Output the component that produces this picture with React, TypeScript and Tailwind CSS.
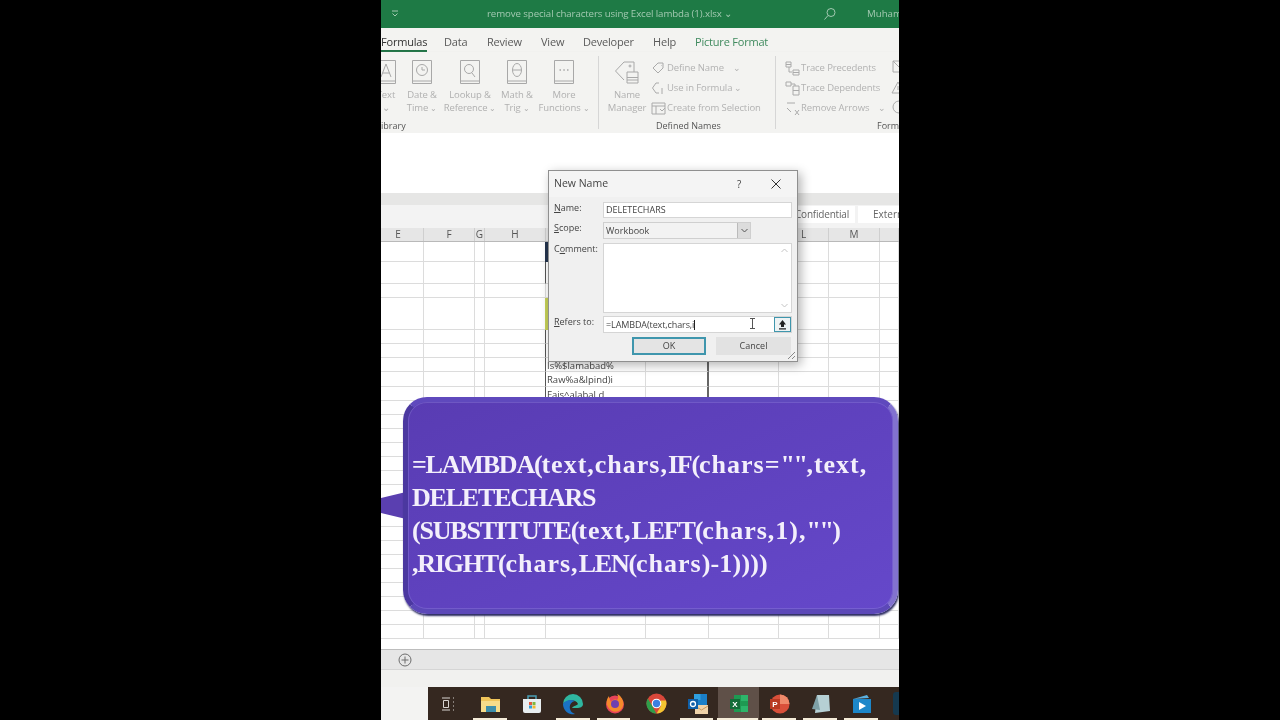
import React from "react";

const rowHeights = ["h-[20px]", "h-[22px]", "h-[14px]", "h-[32px]", "h-[14px]", "h-[14px]", "h-[14px]", "h-[15px]", ...Array(18).fill("h-[14px]")];
const colWidths = ["w-[43px]", "w-[51px]", "w-[10px]", "w-[61px]", "w-[100px]", "w-[63px]", "w-[70px]", "w-[50px]", "w-[51px]", "w-[19px]"];
const headers = ["E", "F", "G", "H", "", "", "", "L", "M", ""];
const cellText: Record<number, string> = { 6: "Is%$lamabad%", 7: "Raw%a&lpind)i", 8: "Fais^alabal d" };

function Book({ children }: { children?: React.ReactNode }) {
  return (
    <svg width="24" height="24" viewBox="0 0 24 24" fill="none" stroke="#a8a8a8" strokeWidth="1">
      <path d="M2.500.5h19v23h-19zM2.500 21h19" />
      {children}
    </svg>
  );
}

function FnItem({ icon, a, b, w, chevronOn }: { icon: React.ReactNode; a: string; b: string; w: string; chevronOn?: boolean }) {
  return (
    <div className={`flex flex-col items-center shrink-0 ${w}`}>
      <div className="h-[24px]">{icon}</div>
      <div className="mt-[4px] text-[9.5px] leading-[13px] tracking-[-0.1px] whitespace-nowrap text-[#b0b0b0]">{a}</div>
      <div className="text-[9.5px] leading-[13px] tracking-[-0.1px] whitespace-nowrap text-[#b0b0b0]">{b}{chevronOn ? <span className="text-[8px]"> ⌄</span> : null}</div>
    </div>
  );
}

function SmallRow({ icon, text, chev }: { icon: React.ReactNode; text: string; chev?: string }) {
  return (
    <div className="flex items-center h-[20px] whitespace-nowrap text-[9.5px] tracking-[-0.1px] text-[#b2b2b2]">
      <svg width="15" height="15" viewBox="0 0 15 15" fill="none" stroke="#aaaaaa" strokeWidth="1" className="shrink-0 mr-[1px]">{icon}</svg>
      <span>{text}</span>
      {chev ? <span className={`text-[9px] ${chev}`}>⌄</span> : null}
    </div>
  );
}

function TaskIcon({ children, cls }: { children: React.ReactNode; cls: string }) {
  return (
    <div className={`relative flex h-full shrink-0 items-center justify-center ${cls}`}>
      {children}
    </div>
  );
}

function Caps({ children }: { children: React.ReactNode }) {
  return <span className="tracking-[-1.2px]">{children}</span>;
}
function Low({ children }: { children: React.ReactNode }) {
  return <span className="tracking-[1px]">{children}</span>;
}
function Q() {
  return <span className="tracking-[-1.5px]">""</span>;
}

export default function App() {
  return (
    <div className="flex h-[720px] w-full justify-center overflow-hidden bg-black font-['Open_Sans','Noto_Sans',sans-serif]">
      <div className="relative flex h-[720px] w-[518px] shrink-0 flex-col overflow-hidden bg-white blur-[0.35px]">
        {/* Title bar */}
        <div className="flex h-[28px] shrink-0 items-center bg-[#1e7a45] text-[9.7px] text-[#a3c9b1]">
          <svg width="8" height="8" viewBox="0 0 8 8" fill="none" stroke="#a3c9b1" className="ml-[10px] shrink-0"><path d="M1 1h6M1.500 3.500 4 6l2.500-2.500" /></svg>
          <div className="ml-[88px] w-[250px] shrink-0 whitespace-nowrap tracking-[-0.1px]">remove special characters using Excel lambda (1).xlsx ⌄</div>
          <svg width="14" height="14" viewBox="0 0 14 14" fill="none" stroke="#a3c9b1" className="ml-[86px] shrink-0"><circle cx="8" cy="5.500" r="4" /><path d="M5 8.500 1.500 12.500" /></svg>
          <div className="ml-[30px] whitespace-nowrap">Muhammad</div>
        </div>

        {/* Tabs */}
        <div className="flex h-[24px] shrink-0 items-start bg-[#f3f3f1] pt-[4px] text-[11px] leading-[20px] tracking-[-0.2px] text-[#5a5a5a]">
          <div className="h-[20px] w-[46px] border-b-[2px] border-[#1f7244] text-[#333]">Formulas</div>
          <div className="ml-[17px] w-[43px]">Data</div>
          <div className="w-[54px]">Review</div>
          <div className="w-[42px]">View</div>
          <div className="w-[70px]">Developer</div>
          <div className="w-[42px]">Help</div>
          <div className="whitespace-nowrap text-[#3f8a5e]">Picture Format</div>
        </div>

        {/* Ribbon */}
        <div className="flex h-[81px] shrink-0 bg-[#f3f3f1] shadow-[0_3px_4px_#c9c9c9]">
          <div className="relative flex w-[217px] shrink-0 pt-[8px]">
            <div className="ml-[-10px] flex">
              <FnItem w="w-[30px]" a="Text" b="⌄" icon={<Book><path d="M7 17 12 4l5 13M8.500 13h7" /></Book>} />
              <FnItem w="w-[42px]" a="Date &" b="Time" chevronOn icon={<Book><circle cx="12" cy="10" r="5.500" /><path d="M12 7v3h3" /></Book>} />
              <FnItem w="w-[54px]" a="Lookup &" b="Reference" chevronOn icon={<Book><circle cx="11" cy="9" r="4.500" /><path d="m14 13 3 4" /></Book>} />
              <FnItem w="w-[40px]" a="Math &" b="Trig" chevronOn icon={<Book><ellipse cx="12" cy="10" rx="4.500" ry="6.500" /><path d="M7.500 10h9" /></Book>} />
              <FnItem w="w-[54px]" a="More" b="Functions" chevronOn icon={<Book><path d="M7.500 10h1.500M11.300 10h1.500M15 10h1.500" strokeWidth="1.500" /></Book>} />
            </div>
            <div className="absolute bottom-[1px] left-0 text-[9px] leading-[13px] text-[#555]">ibrary</div>
          </div>
          <div className="my-[4px] w-px shrink-0 bg-[#d6d6d6]" />
          <div className="relative flex w-[176px] shrink-0 pt-[8px]">
            <FnItem
              w="w-[56px]"
              a="Name"
              b="Manager"
              icon={
                <svg width="26" height="25" viewBox="0 0 26 25" fill="none" stroke="#a8a8a8">
                  <path d="M1.500 11 10 2h10v10M10 20 1.500 11" />
                  <circle cx="16" cy="6" r="1" />
                  <path d="M13 12h11v11H13zM13 17.500h11M13 20h11" />
                </svg>
              }
            />
            <div className="ml-[-4px] mt-[-2px] flex flex-col">
              <SmallRow text="Define Name" chev="ml-[9px]" icon={<path d="M2 7 7 2h5v5l-5 5zM10 4.500h.5" />} />
              <SmallRow text="Use in Formula" chev="ml-[2px]" icon={<path d="M8 2H5L1.500 7 5 12h3M11 7v6" />} />
              <SmallRow text="Create from Selection" icon={<path d="M1 2h13v11H1zM1 5h13M5 5v8M9 8l2 2 3-3" />} />
            </div>
            <div className="absolute bottom-[1px] left-[57px] text-[9px] leading-[13px] text-[#555]">Defined Names</div>
          </div>
          <div className="my-[4px] w-px shrink-0 bg-[#d6d6d6]" />
          <div className="relative flex-1 overflow-hidden pt-[6px] pl-[9px]">
            <SmallRow text="Trace Precedents" icon={<path d="M1 1h5v5H1zM1 3.500h5M8 9h6v5H8zM8 11.500h6M4 6v5h3" />} />
            <SmallRow text="Trace Dependents" icon={<path d="M1 1h5v4H1zM8 5h6v9H8zM8 9.500h6M6 3h4v2" />} />
            <SmallRow text="Remove Arrows" chev="ml-[9px]" icon={<path d="M2 2h8M2 7l4 4M10 9l4 5M14 9l-4 5" />} />
            <div className="absolute left-[114px] top-[6px] flex flex-col">
              <svg width="15" height="20" viewBox="0 0 15 20" fill="none" stroke="#aaa"><path d="M3 3h11v11H3zM3 3l9 9" /></svg>
              <svg width="15" height="20" viewBox="0 0 15 20" fill="none" stroke="#aaa"><path d="M8 4 2 15h12zM8 8v4" /></svg>
              <svg width="15" height="20" viewBox="0 0 15 20" fill="none" stroke="#aaa"><circle cx="9" cy="9" r="6" /></svg>
            </div>
            <div className="absolute bottom-[1px] left-[101px] text-[9px] leading-[13px] text-[#555]">Formulas</div>
          </div>
        </div>

        {/* Formula bar region */}
        <div className="h-[60px] shrink-0 bg-white" />
        <div className="h-[12px] shrink-0 bg-[#e6e6e5]" />

        {/* Sensitivity strip */}
        <div className="flex h-[23px] shrink-0 items-start justify-end bg-[#f3f3f3] pt-[1px] text-[10px] text-[#666]">
          <div className="flex h-[17px] w-[66px] items-center whitespace-nowrap bg-white pl-[6px] tracking-[-0.2px]">Confidential</div>
          <div className="ml-[3px] flex h-[17px] w-[41px] items-center overflow-hidden whitespace-nowrap bg-white pl-[15px]">External</div>
        </div>

        {/* Column headers */}
        <div className="flex h-[14px] shrink-0 border-b border-[#b9b9b9] bg-[#e6e6e6] text-[10px] leading-[13px] text-[#555]">
          {headers.map((h, i) => (
            <div key={i} className={`${colWidths[i]} shrink-0 border-r border-[#cfcfcf] text-center ${i === 0 ? "pr-[8px]" : ""}`}>{h}</div>
          ))}
        </div>

        {/* Grid */}
        <div className="relative min-h-0 flex-1 overflow-hidden">
          {rowHeights.map((rh, r) => (
            <div key={r} className={`flex ${rh} shrink-0`}>
              {colWidths.map((w, c) => (
                <div
                  key={c}
                  className={`${w} shrink-0 overflow-hidden whitespace-nowrap border-b border-r border-[#dcdcdc] pl-[1px] text-[9.5px] leading-[15px] text-[#444] ${c === 3 && r !== 2 && r < 12 ? "border-r-[#555]" : ""} ${c === 5 && r >= 6 && r < 12 ? "border-r-2 border-r-[#666]" : ""}`}
                >
                  {c === 4 ? cellText[r] ?? "" : ""}
                </div>
              ))}
            </div>
          ))}
          {/* coloured edge marks in column I */}
          <div className="absolute left-[164px] top-0 h-[20px] w-[3px] bg-[#24344d]" />
          <div className="absolute left-[164px] top-[56px] h-[32px] w-[3px] bg-[#c4cf57]" />
        </div>

        {/* Sheet tabs */}
        <div className="flex h-[20px] shrink-0 items-center border-t border-[#bdbdbd] bg-[#e6e6e6] pl-[17px]">
          <svg width="14" height="14" viewBox="0 0 14 14" fill="none" stroke="#6d6d6d"><circle cx="7" cy="7" r="6" /><path d="M7 3.500v7M3.500 7h7" /></svg>
        </div>
        {/* Status bar */}
        <div className="h-[18px] shrink-0 border-t border-[#d5d5d5] bg-[#f1f1ef]" />

        {/* Taskbar */}
        <div className="flex h-[33px] shrink-0 bg-[#f3f3f2]">
          <div className="w-[47px] shrink-0" />
          <div className="relative flex flex-1 bg-[#352820]">
            <TaskIcon cls="w-[41px]">
              <svg width="16" height="14" viewBox="0 0 16 14" fill="none" stroke="#d8d4d0"><path d="M1 1h8M1 13h8M2.500 3.500h5v7h-5zM12 1h1M12 5h1M12 9h1M12 13h1" /></svg>
            </TaskIcon>
            <TaskIcon cls="w-[43px]">
              <svg width="21" height="18" viewBox="0 0 21 18"><path d="M1 2h8l2 2h9v13H1z" fill="#f0c55a" /><path d="M1 6h19v11H1z" fill="#f6dc8a" /><path d="M6 11h10v6H6z" fill="#3d8eaa" /></svg>
            </TaskIcon>
            <TaskIcon cls="w-[40px]">
              <svg width="20" height="20" viewBox="0 0 20 20"><path d="M1 5h18v12a2 2 0 0 1-2 2H3a2 2 0 0 1-2-2z" fill="#e8eef0" /><path d="M6 5V2h8v3" fill="none" stroke="#4a9fb5" strokeWidth="1.500" /><path d="M7 8h3v3H7z" fill="#e2583e" /><path d="M10.500 8h3v3h-3z" fill="#7fb83e" /><path d="M7 11.500h3v3H7z" fill="#2f9fd8" /><path d="M10.500 11.500h3v3h-3z" fill="#f3b82f" /></svg>
            </TaskIcon>
            <TaskIcon cls="w-[42px]">
              <svg width="22" height="22" viewBox="0 0 22 22"><path d="M1 11a10 10 0 0 1 20 0c0 3-3 4-6 4H10c2-3 5-2 6-4-2-5-10-5-15 0z" fill="#2fb6a0" /><path d="M1 11c2-4 8-5 12-3-4 1-6 4-5 8 .5 2 2 4 5 5a10 10 0 0 1-12-10z" fill="#1a72c4" /></svg>
            </TaskIcon>
            <TaskIcon cls="w-[41px]">
              <svg width="20" height="21" viewBox="0 0 20 21"><circle cx="10" cy="11.500" r="9" fill="#e8445a" /><path d="M4 3c-3 4-3 8-1 11 2 4 7 6 11 4 4-2 5-7 4-10-1-3-3-6-6-7 2 3 1 5 0 6-3-1-5 0-6 2-1-2-2-4-2-6z" fill="#f58a2c" /><circle cx="10" cy="11" r="4" fill="#6f3fb0" /></svg>
            </TaskIcon>
            <TaskIcon cls="w-[42px]">
              <svg width="21" height="21" viewBox="0 0 21 21"><circle cx="10.500" cy="10.500" r="10" fill="#d9473a" /><path d="M10.500 20.500a10 10 0 0 1-8.700-15l4.500 7.500 4 7.500z" fill="#2f9e4a" /><path d="M20 7.500a10 10 0 0 1-9.500 13l4.500-7.500V7.500z" fill="#f4c531" /><circle cx="10.500" cy="10.500" r="4.800" fill="#fff" /><circle cx="10.500" cy="10.500" r="3.700" fill="#3d7fe0" /></svg>
            </TaskIcon>
            <TaskIcon cls="w-[41px]">
              <svg width="22" height="22" viewBox="0 0 22 22"><path d="M7 1h13v12H7z" fill="#1a7fc8" /><path d="M7 1h6.500v6H7z" fill="#2fa0e0" /><path d="M8 12h13v9H8z" fill="#f0d3a8" /><path d="m8 13 6.500 4 6.500-4" fill="none" stroke="#c8975c" /><path d="M1 6h10v10H1z" fill="#0f5fa8" /><circle cx="6" cy="11" r="2.500" fill="none" stroke="#fff" strokeWidth="1.300" /></svg>
            </TaskIcon>
            <TaskIcon cls="w-[41px] bg-[#5f5048]">
              <svg width="20" height="19" viewBox="0 0 20 19"><path d="M5 1h14v17H5z" fill="#1e9a52" /><path d="M12 1h7v6h-7zM12 12h7v6h-7z" fill="#2cb56a" /><path d="M1 5h10v10H1z" fill="#136c38" /><text x="6" y="13" textAnchor="middle" fontSize="8" fontWeight="700" fill="#fff" fontFamily="Liberation Sans">X</text></svg>
            </TaskIcon>
            <TaskIcon cls="w-[41px]">
              <svg width="21" height="20" viewBox="0 0 21 20"><circle cx="11" cy="10" r="9.500" fill="#d9503a" /><path d="M11 .5a9.500 9.500 0 0 1 9.500 9.500H11z" fill="#ef8a6a" /><path d="M1 5h10v10H1z" fill="#b93a22" /><text x="6" y="13" textAnchor="middle" fontSize="8" fontWeight="700" fill="#fff" fontFamily="Liberation Sans">P</text></svg>
            </TaskIcon>
            <TaskIcon cls="w-[41px]">
              <svg width="20" height="20" viewBox="0 0 20 20"><path d="M6 1h12l1 16-15 2z" fill="#b6d0d4" /><path d="M1 15 6 1l3 15z" fill="#7ea0a6" /></svg>
            </TaskIcon>
            <TaskIcon cls="w-[41px]">
              <svg width="20" height="20" viewBox="0 0 20 20"><path d="M1 5h18v14H1z" fill="#1d87c9" /><path d="M1 5l14-4 2 3z" fill="#5ab0e0" /><path d="m7 8 7 4-7 4z" fill="#fff" /></svg>
            </TaskIcon>
            <div className="flex flex-1 justify-end">
              <div className="my-[5px] w-[6px] rounded-l-[3px] bg-[#15394f]" />
            </div>
            {/* running-app underlines */}
            <div className="absolute bottom-0 left-[45px] h-[2px] w-[34px] bg-[#f5ecd9]" />
            <div className="absolute bottom-0 left-[128px] h-[2px] w-[34px] bg-[#f5ecd9]" />
            <div className="absolute bottom-0 left-[169px] h-[2px] w-[33px] bg-[#f5ecd9]" />
            <div className="absolute bottom-0 left-[252px] h-[2px] w-[33px] bg-[#f5ecd9]" />
            <div className="absolute bottom-0 left-[289px] h-[2px] w-[41px] bg-[#f5ecd9]" />
            <div className="absolute bottom-0 left-[334px] h-[2px] w-[34px] bg-[#f5ecd9]" />
            <div className="absolute bottom-0 left-[375px] h-[2px] w-[34px] bg-[#f5ecd9]" />
            <div className="absolute bottom-0 left-[416px] h-[2px] w-[34px] bg-[#f5ecd9]" />
          </div>
        </div>

        {/* Dialog */}
        <div className="absolute left-[167px] top-[170px] flex h-[192px] w-[250px] flex-col border border-[#8f8f8f] bg-[#f0f0f0] text-[#444] shadow-[3px_3px_10px_#0000004d]">
          <div className="flex h-[26px] shrink-0 items-center bg-[#f4f4f4] pl-[5px] text-[10.5px]">
            <span>New Name</span>
            <span className="ml-[129px] text-[10px]">?</span>
            <svg width="10" height="10" viewBox="0 0 10 10" fill="none" stroke="#333" className="ml-[30px]"><path d="m.5.5 9 9M9.500.5l-9 9" /></svg>
          </div>
          <div className="mt-[5px] flex items-start pl-[5px]">
            <div className="w-[49px] text-[9px] leading-[12px] text-[#444]"><u>N</u>ame:</div>
            <div className="flex h-[16px] w-[189px] items-center border border-[#d5d5d5] bg-white pl-[2px] text-[9px]">DELETECHARS</div>
          </div>
          <div className="mt-[4px] flex items-start pl-[5px]">
            <div className="w-[49px] text-[9px] leading-[12px] text-[#444]"><u>S</u>cope:</div>
            <div className="flex h-[17px] w-[148px] items-center justify-between border border-[#cfcfcf] bg-[#f2f2f2] pl-[2px] text-[9px]">
              <span>Workbook</span>
              <span className="flex h-[15px] w-[13px] items-center justify-center border-l border-[#bbb] bg-[#dcdcdc]">
                <svg width="7" height="5" viewBox="0 0 7 5" fill="none" stroke="#555"><path d="m.5 1 3 3 3-3" /></svg>
              </span>
            </div>
          </div>
          <div className="mt-[4px] flex items-start pl-[5px]">
            <div className="w-[49px] text-[9px] leading-[12px] text-[#444]">C<u>o</u>mment:</div>
            <div className="flex h-[70px] w-[189px] justify-end border border-[#d5d5d5] bg-white">
              <div className="flex w-[13px] flex-col items-center justify-between py-[4px]">
                <svg width="7" height="5" viewBox="0 0 7 5" fill="none" stroke="#c4c4c4"><path d="m.5 4 3-3 3 3" /></svg>
                <svg width="7" height="5" viewBox="0 0 7 5" fill="none" stroke="#c4c4c4"><path d="m.5 1 3 3 3-3" /></svg>
              </div>
            </div>
          </div>
          <div className="mt-[3px] flex items-start pl-[5px]">
            <div className="w-[49px] text-[9px] leading-[12px] text-[#444]"><u>R</u>efers to:</div>
            <div className="relative flex h-[17px] w-[189px] items-center border border-[#d5d5d5] bg-white pl-[2px] text-[9px] tracking-[-0.1px]">
              <span className="border-r border-[#222] leading-[10px]">=LAMBDA(text,chars,i</span>
              <svg width="7" height="11" viewBox="0 0 7 11" fill="none" stroke="#555" className="absolute left-[145px] top-[1px]"><path d="M1 .5h5M1 10.500h5M3.500.5v10" /></svg>
              <span className="absolute right-0 top-0 flex h-[15px] w-[17px] items-center justify-center border border-[#3f96ad] bg-[#eef3f4]">
                <svg width="9" height="10" viewBox="0 0 9 10" fill="#222"><path d="M4.500 0 8 4.500H6V7H3V4.500H1zM1 8.200h7V9.500H1z" /></svg>
              </span>
            </div>
          </div>
          <div className="mt-[4px] flex pl-[83px]">
            <div className="flex h-[18px] w-[74px] items-center justify-center border-2 border-[#3f96ad] bg-[#e4e4e4] text-[9px]">OK</div>
            <div className="ml-[10px] flex h-[18px] w-[75px] items-center justify-center bg-[#e2e2e2] text-[9px]">Cancel</div>
          </div>
          <svg width="10" height="10" viewBox="0 0 10 10" fill="none" stroke="#888" className="absolute bottom-[1px] right-[1px]"><path d="M9 2 2 9M9 6 6 9" /></svg>
        </div>

        {/* Callout */}
        <svg width="25" height="32" viewBox="0 0 25 32" className="absolute left-0 top-[489px]"><path d="M0 9 25 3v27L0 24z" fill="#5a3fb0" /></svg>
        <div className="absolute left-[22px] top-[397px] h-[217px] w-[495px] rounded-[24px] border-[5px] border-b-[#5c48b8] border-l-[#4b38a0] border-r-[#8272d0] border-t-[#5f49bd] bg-gradient-to-br from-[#593cb3] to-[#6548ca] pl-[4px] pt-[46px] font-['Liberation_Serif',serif] text-[26px] font-bold leading-[33px] text-[#f3effb] shadow-[1px_2px_2px_#2a2a60]">
          <div className="pointer-events-none absolute inset-0 rounded-[19px] border border-[#9a8ee055]" />
          <div className="whitespace-nowrap"><Caps>=LAMBDA(</Caps><Low>text,chars,</Low><Caps>IF(</Caps><Low>chars=</Low><Q /><Low>,text,</Low></div>
          <div className="whitespace-nowrap"><Caps>DELETECHARS</Caps></div>
          <div className="whitespace-nowrap"><Caps>(SUBSTITUTE(</Caps><Low>text,</Low><Caps>LEFT(</Caps><Low>chars,1),</Low><Q /><Low>)</Low></div>
          <div className="whitespace-nowrap"><Caps>,RIGHT(</Caps><Low>chars,</Low><Caps>LEN(</Caps><Low>chars</Low><span className="tracking-[0.2px]">)-1))))</span></div>
        </div>
      </div>
    </div>
  );
}
